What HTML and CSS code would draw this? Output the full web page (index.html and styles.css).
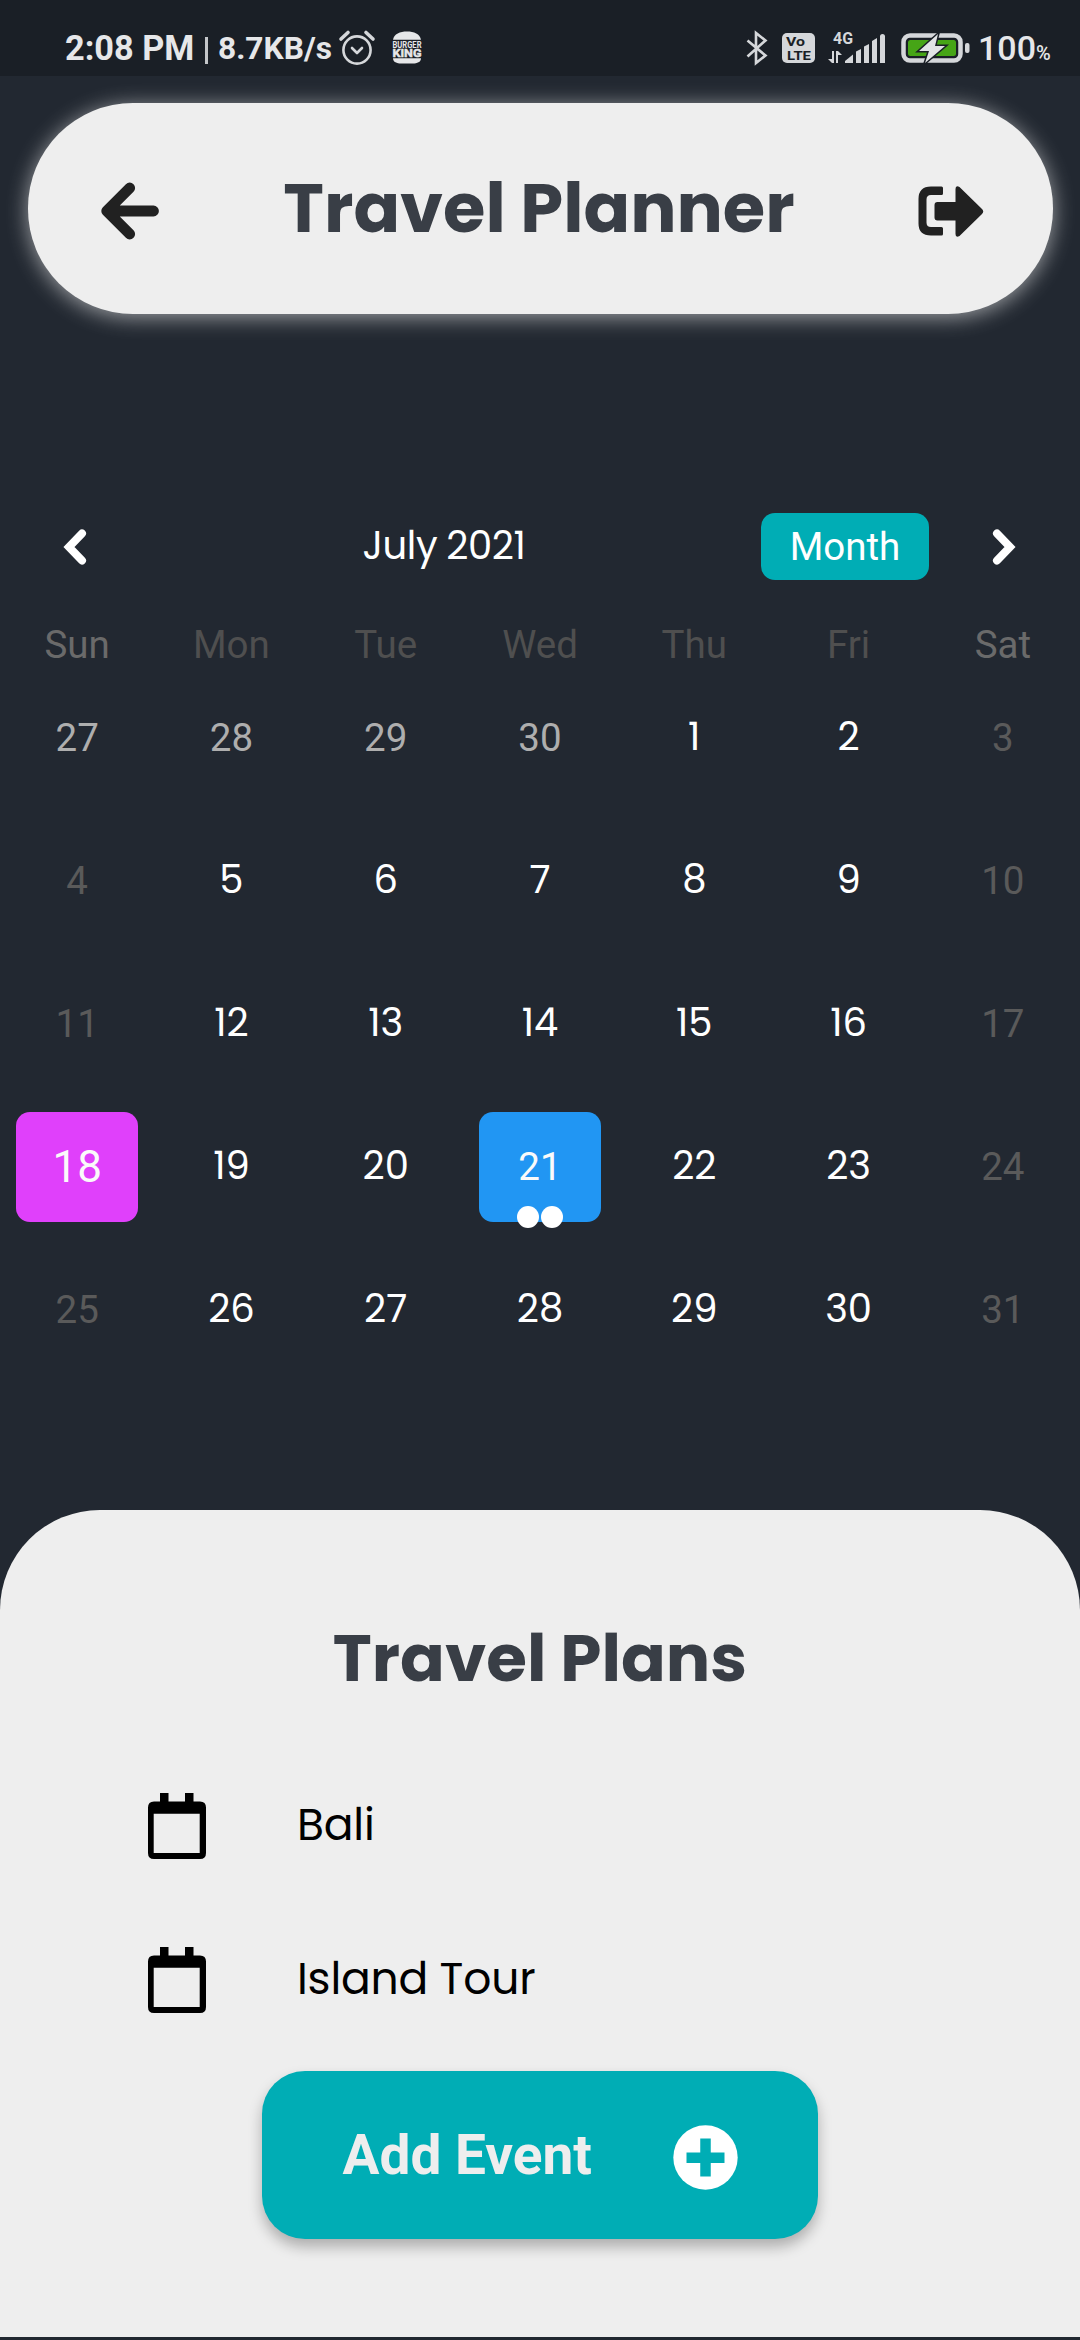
FILE: index.html
```html
<!DOCTYPE html>
<html lang="en">
<head>
<meta charset="utf-8">
<title>Travel Planner</title>
<link rel="stylesheet" href="styles.css">
</head>
<body>
<div class="status">
  <span class="clock">2:08 PM</span>
  <span class="divider"></span>
  <span class="speed">8.7KB/s</span>
  <svg class="alarm" width="36" height="36" viewBox="0 0 36 36" fill="none" stroke="#d5d7da" stroke-width="2.6" stroke-linecap="round" stroke-linejoin="round"><circle cx="18" cy="20" r="13.6"/><path d="M13 18l5 5 5-5"/><path d="M2 9l7-6.500M34 9l-7-6.500" stroke-width="3.600"/></svg>
  <svg class="burger" width="31" height="34" viewBox="0 0 31 34" fill="#e6e7e9"><path d="M1 8.800C2 3 8 .500 15 .500s13 2.500 14 8.300zM1 27.300h28c0 4-4 5.200-8 5.200H9c-4 0-8-1.200-8-5.200z"/><text x=".5" y="16.600" font-size="8.800" textLength="29" lengthAdjust="spacingAndGlyphs">BURGER</text><text x=".5" y="26" font-size="11.500" textLength="29" lengthAdjust="spacingAndGlyphs" stroke="#e6e7e9" stroke-width=".5">KING</text></svg>
  <span class="spacer"></span>
  <svg class="bluetooth" width="22" height="36" viewBox="0 0 22 36" fill="none" stroke="#d5d7da" stroke-width="2.600"><path d="M1.500 10.500L19.500 25.500 10 33V3l9.500 7.500-18 16"/></svg>
  <svg class="volte" width="33" height="30" viewBox="0 0 33 30"><rect width="33" height="30" rx="5" fill="#d5d7da"/><text x="4" y="13" font-size="13.500" textLength="19" lengthAdjust="spacingAndGlyphs">Vo</text><text x="5" y="26.500" font-size="13.500" textLength="24" lengthAdjust="spacingAndGlyphs">LTE</text></svg>
  <svg class="signal" width="58" height="34" viewBox="0 0 58 34" fill="#d5d7da"><text x="5" y="12.500" font-size="16" textLength="20" lengthAdjust="spacingAndGlyphs">4G</text><path d="M4 20h2v12H4L0 28h4zM8 32V20h2l4 4h-4v8z"/><path d="M17 32v-2l8-6.500V32zM28 32V20.500l5-2.500v14zM36 32V15.500l5-2.500v19zM44 32V10l5-3v25zM52 32V5.500q0-2.500 2.500-2.500T57 5.500V32z"/></svg>
  <svg class="battery" width="69" height="32" viewBox="0 0 69 32"><rect x="2.500" y="3.500" width="57" height="25" rx="6.500" fill="none" stroke="#d5d7da" stroke-width="4.500"/><rect x="7" y="8" width="48" height="16" rx="2.500" fill="#46a516"/><rect x="64" y="11" width="4.500" height="10" rx="2" fill="#d5d7da"/><path d="M37 2L18 19h10l-4 12L44 14H34z" fill="#e2e4e6" stroke="#1a1f26" stroke-width="3" paint-order="stroke"/></svg>
  <span class="percent">100<small>%</small></span>
</div>

<div class="app">
  <header class="topbar">
    <svg width="60" height="60" viewBox="0 0 60 60" fill="none" stroke="#212121" stroke-width="10.800" stroke-linecap="round" stroke-linejoin="round"><path d="M29.700 7L6.700 30l23 23M8 30h45.500"/></svg>
    <h1>Travel Planner</h1>
    <svg width="66" height="52" viewBox="0 0 66 52" fill="#212121"><path d="M23.500 1.500a1.500 1.500 0 0 1 1.500 1.500v5.500a1.500 1.500 0 0 1-1.500 1.500H13q-4.500 0-4.500 4.500v23q0 4.500 4.500 4.500h10.500a1.500 1.500 0 0 1 1.500 1.500V49a1.500 1.500 0 0 1-1.500 1.500H13Q.500 50.500.500 38.500V14Q.500 1.500 13 1.500z"/><path d="M19.500 17H37.500V4q0-4 4-2L64 24q2.500 2.500 0 5L41.500 51q-4 2-4-2V35.500h-18q-3 0-3-3V20q0-3 3-3z"/></svg>
  </header>

  <section class="calendar">
    <div class="calbar">
      <svg class="prev" width="24" height="38" viewBox="0 0 24 38" fill="none" stroke="#fff" stroke-width="8" stroke-linecap="round"><path d="M19 5.500L6 19l13 13.500"/></svg>
      <h2>July 2021</h2>
      <span class="format">Month</span>
      <svg class="next" width="24" height="38" viewBox="0 0 24 38" fill="none" stroke="#fff" stroke-width="8" stroke-linecap="round"><path d="M5 5.500L18 19 5 32.500"/></svg>
    </div>
    <div class="weekdays">
      <span class="end">Sun</span><span>Mon</span><span>Tue</span><span>Wed</span><span>Thu</span><span>Fri</span><span class="end">Sat</span>
    </div>
    <div class="days">
      <span class="out">27</span><span class="out">28</span><span class="out">29</span><span class="out">30</span><span>1</span><span>2</span><span class="off">3</span>
      <span class="off">4</span><span>5</span><span>6</span><span>7</span><span>8</span><span>9</span><span class="off">10</span>
      <span class="off">11</span><span>12</span><span>13</span><span>14</span><span>15</span><span>16</span><span class="off">17</span>
      <span class="box today">18</span><span>19</span><span>20</span><span class="box picked">21<i class="dots"><b></b><b></b></i></span><span>22</span><span>23</span><span class="off">24</span>
      <span class="off">25</span><span>26</span><span>27</span><span>28</span><span>29</span><span>30</span><span class="off">31</span>
    </div>
  </section>

  <section class="sheet">
    <h2>Travel Plans</h2>
    <ul>
      <li><svg width="58" height="66" viewBox="0 0 58 66"><path fill-rule="evenodd" d="M12 0h8.500V8.500H37V0h8.500V8.500H52q6 0 6 6V60q0 6-6 6H6q-6 0-6-6V14.500Q0 8.500 6 8.500h6zM5.700 20.700V60h46V20.700z"/></svg><span>Bali</span></li>
      <li><svg width="58" height="66" viewBox="0 0 58 66"><path fill-rule="evenodd" d="M12 0h8.500V8.500H37V0h8.500V8.500H52q6 0 6 6V60q0 6-6 6H6q-6 0-6-6V14.500Q0 8.500 6 8.500h6zM5.700 20.700V60h46V20.700z"/></svg><span>Island Tour</span></li>
    </ul>
    <div class="add">
      <span>Add Event</span>
      <svg width="65" height="65" viewBox="0 0 65 65"><circle cx="32.500" cy="32.500" r="32.200" fill="#fff"/><path d="M32.500 13.500v38M13.500 32.800h38" stroke="#00adb5" stroke-width="10.500"/></svg>
    </div>
  </section>
</div>
</body>
</html>
```

FILE: styles.css
```css
* { box-sizing: border-box; }

body {
  margin: 0;
  width: 1080px;
  height: 2340px;
  overflow: hidden;
  background: #222831;
  font-family: Roboto, sans-serif;
}

h1, h2, ul { margin: 0; padding: 0; }
svg { display: block; flex: none; overflow: visible; }

.status {
  display: flex;
  flex: none;
  align-items: center;
  height: 76px;
  padding: 20px 30px 0 65px;
  background: #1a1f26;
  color: #e6e7e9;
  font-weight: 700;
  white-space: nowrap;
}
.status svg text { font-family: Roboto, sans-serif; font-weight: 700; }
.clock { width: 140px; font-size: 34.300px; }
.divider { width: 3px; height: 27px; margin-top: 5px; background: #c4c6c9; }
.speed { width: 131px; padding-left: 10px; font-size: 31.700px; }
.burger { margin-left: 17px; }
.spacer { flex: 1; }
.bluetooth { margin-right: 14px; }
.volte { margin-right: 13px; fill: #1a1f26; }
.signal { margin-right: 15px; }
.battery { margin-right: 8px; }
.percent { width: 72px; font-size: 34px; font-weight: 500; }
.percent small { font-size: 20px; }

.app {
  display: flex;
  flex-direction: column;
  height: 2264px;
  overflow: hidden;
}

.topbar {
  display: flex;
  flex: none;
  align-items: center;
  justify-content: space-between;
  height: 210.500px;
  margin: 27.300px 27.500px 0;
  padding: 5px 68.500px 0 72.500px;
  border-radius: 105px;
  background: #eee;
  box-shadow: 0 3px 21px rgba(238, 238, 238, .62);
}
.topbar h1, .sheet h2 {
  color: #393e46;
  font-family: Poppins, Inter, sans-serif;
  font-weight: 700;
  white-space: nowrap;
}
.topbar h1 { font-size: 68.750px; line-height: 80px; margin-top: -7px; }

.calbar {
  display: flex;
  align-items: center;
  height: 66.500px;
  margin-top: 199.500px;
}
.prev { margin-left: 63px; margin-right: 40px; }
.next { margin: 0 64px 0 63px; }
.calbar h2 {
  flex: 1;
  padding-bottom: 3px;
  color: #fff;
  font: 400 38.500px Poppins, Inter, sans-serif;
  letter-spacing: -.35px;
  word-spacing: -1px;
  text-align: center;
}
.format {
  width: 168px;
  padding-top: 1px;
  border-radius: 14px;
  background: #00adb5;
  color: #fff;
  font-size: 38.500px;
  line-height: 65.500px;
  text-align: center;
}

.weekdays, .days {
  display: grid;
  grid-template-columns: repeat(7, 1fr);
  text-align: center;
}
.weekdays {
  height: 86.500px;
  padding-top: 42px;
  color: #4f4f4f;
  font-size: 38.500px;
  line-height: 46px;
}
.weekdays .end { color: #6a6a6a; }

.days { grid-auto-rows: 143px; }
.days span {
  display: flex;
  align-items: center;
  justify-content: center;
  padding-bottom: 3px;
  color: #fff;
  font: 400 38.500px Poppins, Inter, sans-serif;
}
.days .out, .days .off, .days .box { padding: 0; font-family: Roboto, sans-serif; }
.days .out { color: #aeaeae; }
.days .off { color: #5a5a5a; }
.days .box {
  position: relative;
  margin: 16.500px 16.200px;
  border-radius: 14px;
  color: #fafafa;
}
.days .today { background: #e040fb; font-size: 44px; }
.days .picked { background: #2196f3; }
.dots {
  position: absolute;
  left: 0;
  right: 0;
  bottom: -6px;
  display: flex;
  justify-content: center;
  gap: 2px;
}
.dots b { width: 22px; height: 22px; border-radius: 50%; background: #fff; }

.sheet {
  display: flex;
  flex: none;
  flex-direction: column;
  align-items: center;
  height: 827.500px;
  margin-top: 128.400px;
  padding-top: 115px;
  border-radius: 100px 100px 0 0;
  background: #eee;
}
.sheet h2 { font-size: 66px; line-height: 66px; }
.sheet ul {
  width: 100%;
  padding-left: 147.500px;
  margin-top: 58px;
  list-style: none;
}
.sheet li {
  display: flex;
  align-items: center;
  gap: 91.500px;
  height: 154px;
  color: #000;
  font: 400 44px Poppins, Inter, sans-serif;
  letter-spacing: -.2px;
}
.sheet li span { padding-bottom: 3px; }

.add {
  display: flex;
  flex: none;
  align-items: center;
  justify-content: space-between;
  width: 556px;
  height: 167.500px;
  margin-top: 14.500px;
  padding: 1px 80.500px 0;
  border-radius: 43px;
  background: #00adb5;
  box-shadow: 0 8px 14px rgba(0, 0, 0, .27);
  color: #eee;
  font-size: 55px;
  font-weight: 700;
}
.add svg { margin-top: 4px; }
```
